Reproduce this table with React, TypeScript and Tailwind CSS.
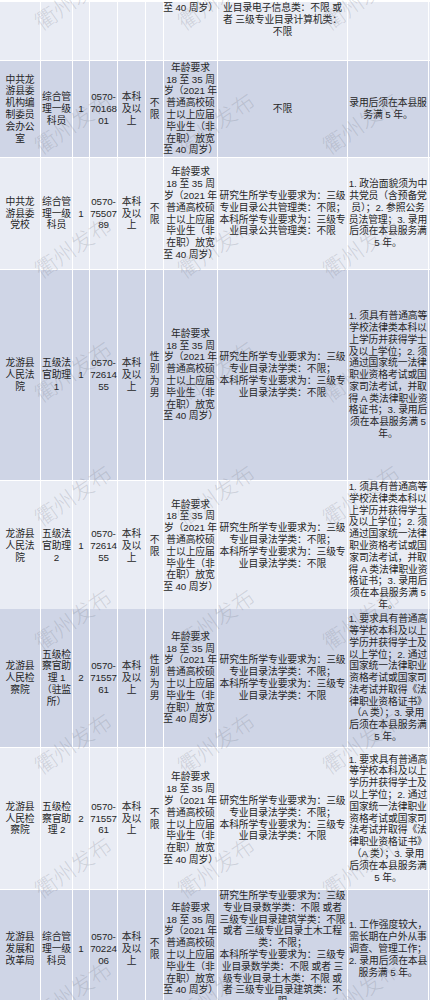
import React from "react";

const LIGHT = "bg-[#e9ecf4]";
const DARK = "bg-[#cfd5e6]";

const AGE = [
  "年龄要求",
  "18 至 35 周",
  "岁（2021 年",
  "普通高校硕",
  "士以上应届",
  "毕业生（非",
  "在职）放宽",
  "至 40 周岁）",
];

const LAW_MAJOR = [
  "研究生所学专业要求为：三级",
  "专业目录法学类：不限；",
  "本科所学专业要求为：三级专",
  "业目录法学类：不限",
];

const COURT_NOTE = [
  "1. 须具有普通高等",
  "学校法律类本科以",
  "上学历并获得学士",
  "及以上学位；2. 须",
  "通过国家统一法律",
  "职业资格考试或国",
  "家司法考试，并取",
  "得 A 类法律职业资",
  "格证书；3. 录用后",
  "须在本县服务满 5",
  "年。",
];

const PROC_NOTE = [
  "1. 要求具有普通高",
  "等学校本科及以上",
  "学历并获得学士及",
  "以上学位；2. 通过",
  "国家统一法律职业",
  "资格考试或国家司",
  "法考试并取得《法",
  "律职业资格证书》",
  "（A 类）；3. 录用",
  "后须在本县服务满",
  "5 年。",
];

type Row = { h: string; bg: string; top?: boolean; cells: string[][] };

const rows: Row[] = [
  {
    h: "h-[58px]",
    bg: LIGHT,
    top: true,
    cells: [
      [],
      [],
      [],
      [],
      [],
      [],
      ["至 40 周岁）"],
      ["业目录电子信息类：不限 或", "者 三级专业目录计算机类：", "不限"],
      [],
    ],
  },
  {
    h: "h-[96px]",
    bg: DARK,
    cells: [
      ["中共龙", "游县委", "机构编", "制委员", "会办公", "室"],
      ["综合管", "理一级", "科员"],
      ["1"],
      ["0570-", "70168", "01"],
      ["本科", "及以", "上"],
      ["不", "限"],
      AGE,
      ["不限"],
      ["录用后须在本县服", "务满 5 年。"],
    ],
  },
  {
    h: "h-[111px]",
    bg: LIGHT,
    cells: [
      ["中共龙", "游县委", "党校"],
      ["综合管", "理一级", "科员"],
      ["1"],
      ["0570-", "75507", "89"],
      ["本科", "及以", "上"],
      ["不", "限"],
      AGE,
      [
        "研究生所学专业要求为：三级",
        "专业目录公共管理类：不限；",
        "本科所学专业要求为：三级专",
        "业目录公共管理类：不限",
      ],
      [
        "1. 政治面貌须为中",
        "共党员（含预备党",
        "员）；2. 参照公务",
        "员法管理；3. 录用",
        "后须在本县服务满",
        "5 年。",
      ],
    ],
  },
  {
    h: "h-[210px]",
    bg: DARK,
    cells: [
      ["龙游县", "人民法", "院"],
      ["五级法", "官助理", "1"],
      ["1"],
      ["0570-", "72614", "55"],
      ["本科", "及以", "上"],
      ["性", "别", "为", "男"],
      AGE,
      LAW_MAJOR,
      COURT_NOTE,
    ],
  },
  {
    h: "h-[127px]",
    bg: LIGHT,
    cells: [
      ["龙游县", "人民法", "院"],
      ["五级法", "官助理", "2"],
      ["1"],
      ["0570-", "72614", "55"],
      ["本科", "及以", "上"],
      ["不", "限"],
      AGE,
      LAW_MAJOR,
      COURT_NOTE,
    ],
  },
  {
    h: "h-[138px]",
    bg: DARK,
    cells: [
      ["龙游县", "人民检", "察院"],
      ["五级检", "察官助", "理 1", "（驻监", "所）"],
      ["2"],
      ["0570-", "71557", "61"],
      ["本科", "及以", "上"],
      ["性", "别", "为", "男"],
      AGE,
      LAW_MAJOR,
      PROC_NOTE,
    ],
  },
  {
    h: "h-[141px]",
    bg: LIGHT,
    cells: [
      ["龙游县", "人民检", "察院"],
      ["五级检", "察官助", "理 2"],
      ["2"],
      ["0570-", "71557", "61"],
      ["本科", "及以", "上"],
      ["不", "限"],
      AGE,
      LAW_MAJOR,
      PROC_NOTE,
    ],
  },
  {
    h: "h-[116px]",
    bg: DARK,
    cells: [
      ["龙游县", "发展和", "改革局"],
      ["综合管", "理一级", "科员"],
      ["1"],
      ["0570-", "70224", "06"],
      ["本科", "及以", "上"],
      ["不", "限"],
      AGE,
      [
        "研究生所学专业要求为：三级",
        "专业目录数学类：不限 或者",
        "三级专业目录建筑学类：不限",
        "或者 三级专业目录土木工程",
        "类：不限；",
        "本科所学专业要求为：三级专",
        "业目录数学类：不限 或者 三",
        "级专业目录土木类：不限 或",
        "者 三级专业目录建筑类：不",
        "限",
      ],
      [
        "1. 工作强度较大，",
        "需长期在户外从事",
        "调查、管理工作；",
        "2. 录用后须在本县",
        "服务满 5 年。",
      ],
    ],
  },
];

const WM_ROWS = [-2, 122, 246, 370, 494, 618, 742, 866, 990];
const WM_COLS = [72, 215, 360];

function Cell({ lines, bg, top }: { lines: string[]; bg: string; top?: boolean }) {
  return (
    <div
      className={`${bg} flex ${top ? "items-start" : "items-center"} justify-center text-center overflow-visible`}
    >
      <div className="whitespace-nowrap">
        {lines.map((l, i) => (
          <div key={i}>{l}</div>
        ))}
      </div>
    </div>
  );
}

export default function App() {
  return (
    <div
      className="relative w-[430px] h-[1000px] overflow-hidden bg-white text-[9.8px] leading-[11.8px] text-[#262626] tracking-[-0.1px]"
      style={{ fontFamily: '"Liberation Sans", "Noto Sans CJK SC", sans-serif' }}
    >
      <div className="flex flex-col gap-px pt-[2px]">
        {rows.map((r, ri) => (
          <div
            key={ri}
            className={`grid grid-cols-[40px_31px_16px_27px_27px_17px_53px_129px_80px_1fr] gap-px ${r.h}`}
          >
            {r.cells.map((c, ci) => (
              <Cell key={ci} lines={c} bg={r.bg} top={r.top} />
            ))}
            <div className={r.bg} />
          </div>
        ))}
      </div>
      <div className="pointer-events-none absolute inset-0">
        {WM_ROWS.map((y) =>
          WM_COLS.map((x) => (
            <div
              key={`${x}-${y}`}
              className="absolute -translate-x-1/2 -translate-y-1/2 -rotate-[35deg] whitespace-nowrap text-[22px] leading-none font-light text-[rgba(110,112,125,0.22)]"
              style={{ left: x, top: y, fontFamily: '"Noto Sans CJK SC", sans-serif' }}
            >
              衢州发布
            </div>
          ))
        )}
      </div>
    </div>
  );
}
